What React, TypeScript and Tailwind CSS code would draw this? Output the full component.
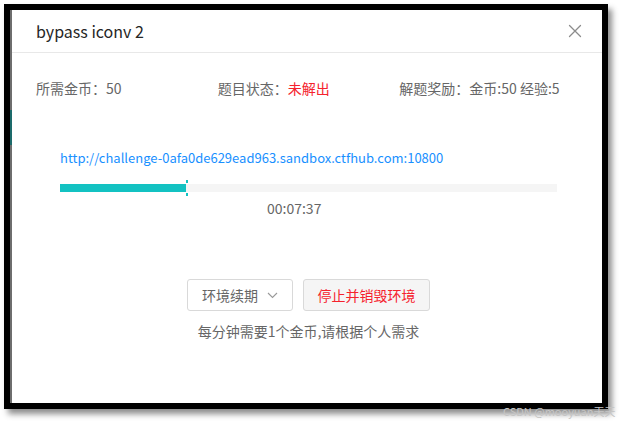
import React from 'react';

const CloseIcon = () => (
  <svg width="14" height="14" viewBox="0 0 14 14" fill="none">
    <path d="M1.5 1.5L12.5 12.5M12.5 1.5L1.5 12.5" stroke="#8c8c8c" strokeWidth="1.3" strokeLinecap="round" />
  </svg>
);

const ChevronDown = () => (
  <svg width="11" height="7" viewBox="0 0 11 7" fill="none">
    <path d="M1 1L5.5 5.5L10 1" stroke="#999" strokeWidth="1.1" />
  </svg>
);

export default function App() {
  const progress = 25.4; // percent of remaining time

  return (
    <div
      className="relative w-[620px] h-[423px] bg-white overflow-hidden"
      style={{ fontFamily: '"Noto Sans CJK SC", "Noto Sans", sans-serif' }}
    >
      {/* screenshot frame */}
      <div className="ml-[4px] mt-[4px] w-[604px] h-[405px] border-[6px] border-black shadow-[4px_5px_6px_rgba(0,0,0,0.45)] flex">
        <div className="w-[2px] flex flex-col bg-[#6e6e6e]">
          <div className="h-[100px]" />
          <div className="h-[35px] bg-[#1d6b6b]" />
        </div>

        <div className="flex-1 flex flex-col bg-white">
          {/* header */}
          <div className="h-[43px] flex items-center justify-between pl-[24px] pr-[20px] border-b border-[#e8e8e8]">
            <span className="text-[16px] font-normal text-[#262626]">bypass iconv 2</span>
            <CloseIcon />
          </div>

          {/* body */}
          <div className="pl-[24px] pr-[21px] pt-[24px]">
            <div className="grid grid-cols-3 text-[14px] leading-[22px] text-[#666]">
              <div>所需金币：50</div>
              <div>
                题目状态：<span className="text-[#f5222d]">未解出</span>
              </div>
              <div>解题奖励：金币:50 经验:5</div>
            </div>

            <div className="mt-[48px] pl-[24px] pr-[24px]">
              <div className="text-[13px] leading-[22px] text-[#1890ff]">
                http://challenge-0afa0de629ead963.sandbox.ctfhub.com:10800
              </div>

              <div className="relative mt-[15px] h-[8px] bg-[#f5f5f5]">
                <div className="h-full bg-[#13c2c2]" style={{ width: `${progress}%` }} />
                <div className="absolute left-[126px] top-[-4px] w-[2px] h-[3px] bg-[#13c2c2]" />
                <div className="absolute left-[126px] top-[9px] w-[2px] h-[3px] bg-[#13c2c2]" />
              </div>

              <div className="mt-[5px] pl-[207px] text-[14px] leading-[22px] text-[#666]">00:07:37</div>
            </div>

            <div className="mt-[60px] flex justify-center gap-[10px]">
              <button className="h-[32px] w-[106px] flex items-center justify-center gap-[9px] border border-[#d9d9d9] rounded-[3px] bg-white text-[14px] text-[#666]">
                环境续期
                <ChevronDown />
              </button>
              <button className="h-[32px] w-[127px] flex items-center justify-center border border-[#d9d9d9] rounded-[3px] bg-[#f5f5f5] text-[14px] text-[#f5222d]">
                停止并销毁环境
              </button>
            </div>

            <div className="mt-[9px] text-center text-[14px] leading-[22px] text-[#666]">
              每分钟需要1个金币,请根据个人需求
            </div>
          </div>
        </div>
      </div>

      {/* watermark */}
      <div className="absolute left-[503px] top-[404px] text-[11px] leading-[14px] text-[#c4c4c4] whitespace-nowrap">
        CSDN @mooyuan天天
      </div>
    </div>
  );
}
